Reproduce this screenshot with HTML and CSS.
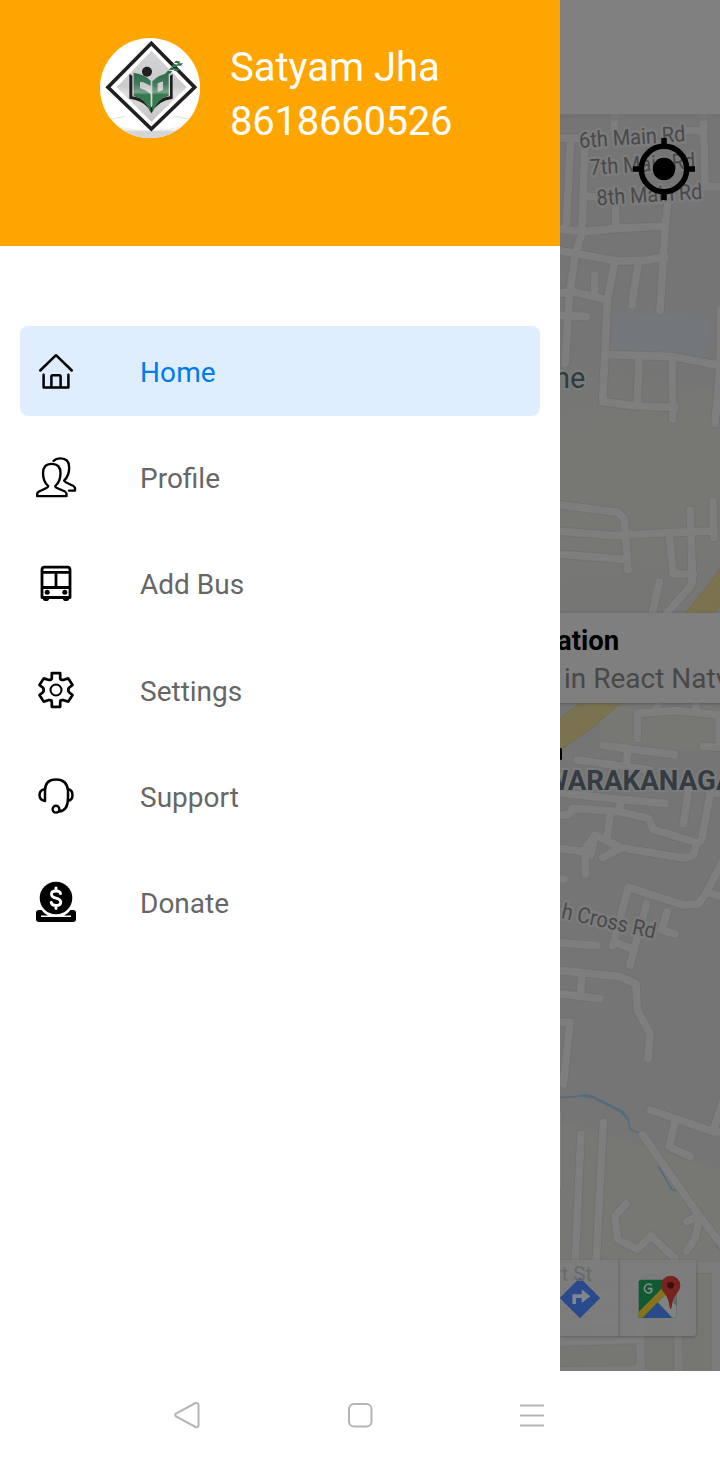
FILE: index.html
```html
<!DOCTYPE html>
<html lang="en">
<head>
<meta charset="utf-8">
<title>Home</title>
<link rel="stylesheet" href="styles.css">
</head>
<body>
<div class="app">
<aside class="drawer">
  <header class="profile">
    <svg class="avatar" viewBox="30 30 300 300">
      <defs>
        <clipPath id="round"><circle cx="180" cy="180" r="150"/></clipPath>
        <linearGradient id="steel" x2="0" y2="1"><stop offset="0" stop-color="#d4d4d6"/><stop offset=".5" stop-color="#cbcbcd"/><stop offset=".6" stop-color="#dedede"/><stop offset="1" stop-color="#c2c2c4"/></linearGradient>
        <linearGradient id="leaf" gradientUnits="userSpaceOnUse" x1="0" y1="130" x2="0" y2="255"><stop offset="0" stop-color="#2b6b45"/><stop offset=".3" stop-color="#41795a"/><stop offset=".5" stop-color="#7fa38b"/><stop offset=".56" stop-color="#377a50"/><stop offset="1" stop-color="#347a4d"/></linearGradient>
      </defs>
      <circle cx="180" cy="180" r="150" fill="#fff"/>
      <g clip-path="url(#round)">
        <path d="M50 283Q180 330 310 283V340H50Z" fill="#f0f0f1"/>
        <path d="M40 308H320V330H40Z" fill="#d2d6d8"/>
        <path d="M60 275L105 265M252 264L300 274" stroke="#ccc" stroke-width="2"/>
        <path d="M184 46L314 178L184 303L54 178Z" fill="#fff" stroke="#231f20" stroke-width="11"/>
        <path d="M184 68L290 178L184 281L80 178Z" fill="url(#steel)"/>
        <path d="M118 138V212Q168 218 184 256Q202 218 248 212V138L240 143V205Q200 210 185 238Q166 210 127 205V143Z" fill="#231f20"/>
        <circle cx="171" cy="131" r="15" fill="#231f20"/>
        <path fill-rule="evenodd" d="M131 134Q166 140 182 158V174L166 166Q158 161 150 162V181Q166 184 182 198V254Q166 211 131 204ZM187 160Q204 141 236 135V204Q204 210 187 254ZM203 166V192L219 186V160Z" fill="url(#leaf)"/>
        <path d="M252 105L258 98L272 101L266 106ZM236 125L243 118L256 120L250 126ZM225 138L233 128L247 129L240 137ZM264 106H279L273 113H260ZM244 116L250 108L264 110L257 118ZM251 128L257 121L269 123L263 130Z" fill="#2d7048"/>
      </g>
    </svg>
    <div class="person"><div>Satyam Jha</div><div class="phone">8618660526</div></div>
  </header>
  <nav class="menu">
    <a class="item active">
      <svg viewBox="0 0 40 40"><path d="M4.200 19.500L20 4.200L35.800 19.500M7.600 23.700V36.500H32.400V23.700M15.400 36V25.500Q15.400 24.200 16.700 24.200H23.300Q24.600 24.200 24.600 25.500V36" stroke-width="2.500"/></svg>
      <span>Home</span></a>
    <a class="item">
      <svg viewBox="0 0 40 40"><path d="M12.200 28Q7 23 7 14Q7 3.800 15.700 3.800Q24.500 3.800 24.500 14Q24.500 23 19.200 28Q19.200 29.500 21.500 30.500L29 34Q30.500 35 30.500 36.500V39H1.200V36.500Q1.200 35 3 34L10 30.500Q12.200 29.500 12.200 28ZM17.500 .8Q20 -2 24.500 -2Q33.200 -2 33.200 8Q33.200 16.500 28.200 22Q28.200 23 30 24L37.500 28Q39 29 39 30.500V33H33" transform="translate(0 3.300) scale(1 .92)" stroke-width="2.400"/></svg>
      <span>Profile</span></a>
    <a class="item">
      <svg viewBox="0 0 40 40"><path d="M8.500 4.200H31.500Q34 4.200 34 7V34.500H6V7Q6 4.200 8.500 4.200ZM6 9.300H34M20 9.300V24.500M6 24.500H34" stroke-width="2.800"/><path d="M7 34H13V36Q13 38 10 38T7 36ZM27 34H33V36Q33 38 30 38T27 36Z" fill="#000" stroke="none"/><circle cx="11.200" cy="29.200" r="2.500" fill="#000" stroke="none"/><circle cx="28.800" cy="29.200" r="2.500" fill="#000" stroke="none"/></svg>
      <span>Add Bus</span></a>
    <a class="item">
      <svg viewBox="0 0 40 40"><path d="M15.800 3.200H24.200V8Q24.200 9.800 26 9.800L27.800 9.800L32.300 8.400L36.500 15L33 17.800Q31.500 20 33 22.200L36.500 25L32.300 31.600L27.800 30.200H26Q24.200 30.200 24.200 32V36.800H15.800V32Q15.800 30.200 14 30.200H12.200L7.700 31.600L3.500 25L7 22.200Q8.500 20 7 17.800L3.500 15L7.700 8.400L12.200 9.800H14Q15.800 9.800 15.800 8Z" stroke-width="2.700"/><circle cx="20" cy="20" r="5.500" stroke-width="2"/></svg>
      <span>Settings</span></a>
    <a class="item">
      <svg viewBox="0 0 40 40"><path d="M9 25V14.500Q9 3.500 20 3.500T32 14.500V22Q32 34.800 23 35.600M9 13Q3.500 14 3.500 19T9 25M32 13Q36.500 14 36.500 19T32 25" stroke-width="2.500"/><circle cx="20" cy="33.200" r="3.400" stroke-width="2.400"/></svg>
      <span>Support</span></a>
    <a class="item">
      <svg viewBox="0 0 40 40"><circle cx="20" cy="16" r="16.300" fill="#000" stroke="none"/><path d="M3 28H5.500Q8 32 12 33.500H5V35H35V33.500H28Q32 32 34.500 28H37Q40 28 40 31V37Q40 40 37 40H3Q0 40 0 37V31Q0 28 3 28Z" fill="#000" stroke="none"/><path d="M24.500 11.500Q24 9 20 9Q15.500 9 15.500 12T20 16.200T24.800 20Q24.800 23.500 20 23.500Q15.800 23.500 15.200 20.500M20 6V9M20 23.500V26.500" stroke="#fff" stroke-width="2.900"/></svg>
      <span>Donate</span></a>
  </nav>
</aside>
<main class="backdrop">
<svg class="map" viewBox="560 0 160 1371">
  <defs>
    <linearGradient id="sand" gradientUnits="userSpaceOnUse" x1="560" y1="360" x2="600" y2="650"><stop offset="0" stop-color="#757575"/><stop offset=".25" stop-color="#777774"/><stop offset=".65" stop-color="#777774"/><stop offset="1" stop-color="#757575"/></linearGradient>
    <linearGradient id="bar" x2="0" y2="1"><stop offset="0" stop-color="#6f6f6f"/><stop offset="1" stop-color="#757575"/></linearGradient>
    <g id="roads">
      <path transform="translate(550 100) scale(.33333)" d="M30 115L130 114M390 94L450 90M193 42V90M62 118L48 390M105 118L96 395M460 42L465 260H515M115 290H150M197 315L198 380M355 295L345 385L330 632M20 385L95 395L200 385L345 378M98 395L75 465L58 590L45 790M20 450L200 483L280 482L345 470M193 490L172 600L158 905M134 525V590M20 580L75 577L165 598M20 645L110 650M265 485L246 616M165 763L370 770L515 797M267 770L262 905M367 770L368 958M158 905L260 918L375 922M512 630L510 800L495 970"/>
      <path transform="translate(550 450) scale(.33333)" d="M20 163L205 187L222 205L234 360M20 243L190 257L360 248L492 243M20 312L225 328M421 180L427 375L425 405L350 490M489 155L492 262M358 258L370 372H430M328 395L308 485M262 865L263 790L380 782L515 795M322 750V785M438 750V785M160 886L373 914M460 888L515 893M508 795V890M235 895L228 945M82 930L300 960"/>
      <path transform="translate(550 780) scale(.33333)" d="M20 38L212 58L345 70M212 58L208 95M20 105H55L68 85L210 95L295 115L310 148L440 188M418 10L400 132M490 -10L455 180L440 190L430 225L405 235L215 203L135 165L122 225M135 165L100 215M490 40H520M182 95L170 180M158 233L215 203M20 205L105 215L106 282M20 297H42M188 497L235 322L400 375L445 372L465 345L520 240M470 335L520 352M290 370L240 555M195 487L250 507M352 395L335 450L375 462M20 488L140 497M20 570L210 590L258 612L262 690L300 760L294 835M95 590L92 640M20 640L150 656M20 725L60 727L40 912"/>
      <path transform="translate(550 1080) scale(.33333)" d="M24 105V320M93 162L75 555M160 128L138 555M302 90L490 155H520M520 60L490 150M375 125L358 200L422 230M278 165L380 310L450 410L520 500M228 372L195 408L203 478L262 508L303 468L375 535V555M450 410L435 475L410 513M410 425L440 410"/>
    </g>
  </defs>
  <path class="land" d="M560 0H720V1371H560Z"/>
  <path d="M560 360L720 390V610H560Z" fill="url(#sand)"/>
  <path d="M612 313L708 318L706 357L673 353L611 349Z" fill="#73767a"/>
  <path d="M560 1120L720 1170V1371H560ZM600 705H720V750H600Z" fill="#777774"/>
  <g transform="translate(550 1080) scale(.33333)" class="river">
    <path d="M30 52L75 50L100 46" stroke-width="5"/><path d="M95 46L125 50L170 72L215 95L235 118" stroke-width="9"/><path d="M235 115L240 148L275 163" stroke-width="5"/><path d="M325 258L365 328L380 332M498 495L515 512" stroke-width="5"/>
  </g>
  <g transform="translate(550 450) scale(.33333)" class="highway"><path d="M515 350L475 405L404 492H490L515 460ZM95 755H217L120 838L25 905V810Z"/></g>
  <path d="M560 1262H720V1371H560Z" fill="#7c7c7c"/>
  <g transform="translate(550 1080) scale(.33333)" class="block"><path d="M20 800L257 792V855L20 860ZM284 580H370L372 880H286ZM393 580H484V880H400ZM30 590L252 583V630L30 638ZM30 670L256 663V700H30ZM30 740L256 730V762L30 767Z"/></g>
  <use href="#roads" class="edge"/><use href="#roads" class="road"/>
  <path d="M560 117L610 115" stroke="#696969"/>
  <g class="street">
    <text transform="translate(579.500 148) rotate(-3.700)" textLength="106.500" lengthAdjust="spacingAndGlyphs">6th Main Rd</text>
    <text transform="translate(590 175) rotate(-3.700)" textLength="106" lengthAdjust="spacingAndGlyphs">7th Main Rd</text>
    <text transform="translate(597 205.500) rotate(-3.700)" textLength="106" lengthAdjust="spacingAndGlyphs">8th Main Rd</text>
    <text transform="translate(560.500 918) rotate(12.500)" textLength="96" lengthAdjust="spacingAndGlyphs">h Cross Rd</text>
  </g>
  <text class="place" x="585.500" y="387.500" text-anchor="end">ne</text>
  <text class="place area" x="544" y="790" textLength="190.500" lengthAdjust="spacingAndGlyphs">WARAKANAGA</text>
  <rect x="556" y="748" width="6" height="12" rx="1.500"/>
  <path d="M560 0H720V114H560Z" fill="#808080"/><path d="M560 114H720V121H560Z" fill="url(#bar)" opacity=".65"/>
  <g class="locate"><circle cx="664" cy="169" r="22.700"/><path d="M664 138V146M664 192V200M633 169H641M687 169H695"/><circle class="dot" cx="664" cy="169" r="11.200"/></g>
</svg>
<div class="callout"><strong>ation</strong><span>in React Natv</span></div>
<div class="controls">
  <span class="ghost">rt St</span>
  <svg class="direction" viewBox="0 0 120 120"><path d="M60 1L119 60L60 119L1 60Z" fill="#294a8c" stroke="#294a8c" stroke-width="3" stroke-linejoin="round"/><path d="M37 78V49H65V34L91 55L65 75V60H48V78Z" fill="#81858e"/></svg>
  <svg class="google" viewBox="0 0 130 130"><path d="M8 14H114Q122 14 122 22V120Q122 128 114 128H8V22Q8 14 16 14Z" fill="#105a32"/><path d="M65 82L109 128H23Z" fill="#294a8c"/><path d="M65 82L90 57L122 93V120Q122 128 114 128H109Z" fill="#828282"/><path d="M90 57L122 25V93Z" fill="#696969"/><path d="M8 110L79 39L95 52L20 128H8Z" fill="#85731f"/><path d="M47 31A13 13 0 1 0 47 50V41H35" fill="none" stroke="#858b87" stroke-width="5"/><path d="M104 2A29 29 0 0 1 133 31Q133 44 121 57Q109 73 107 97Q106 102 104 102T101 97Q99 73 87 57Q75 44 75 31A29 29 0 0 1 104 2Z" fill="#75231c"/><circle cx="104" cy="31" r="10" fill="#3c0f0c"/></svg>
</div>
</main>
<footer class="system">
  <svg viewBox="0 0 28 28"><path d="M22.500 2L3 12.500Q1.300 14 3 15.500L22.500 26Q25.500 27 25.500 24V4Q25.500 1.500 22.500 2Z"/></svg>
  <svg viewBox="0 0 28 28"><rect x="3" y="3" width="22.500" height="22.500" rx="5"/></svg>
  <svg viewBox="0 0 28 28"><path d="M2 4.500H26M2 14.500H26M2 24.500H26"/></svg>
</footer>
</div>
</body>
</html>
```
FILE: styles.css
```css
* { box-sizing: border-box; }
body { margin: 0; background: #fff; font-family: Roboto, sans-serif; }
.app { width: 720px; height: 1458px; display: grid; grid-template: 1371px 87px / 560px 160px; overflow: hidden; }
.drawer { background: #fff; }
.profile { height: 246px; padding: 38px 0 0 100px; display: flex; align-items: flex-start; gap: 30px; background: #ffa500; }
.avatar { width: 100px; height: 100px; }
.person { padding-top: 3px; color: #fff; font-size: 40px; line-height: 54px; }
.phone { letter-spacing: -.25px; }
.menu { display: grid; gap: 16.400px; padding: 80px 20px 0; }
.item { height: 90px; display: flex; align-items: center; gap: 64px; padding: 2px 16px 0; border-radius: 8px; font-size: 28px; color: #666; }
.item svg { width: 40px; height: 40px; margin-bottom: 3px; overflow: visible; fill: none; stroke: #000; stroke-linecap: round; stroke-linejoin: round; }
.active { background: #dfeeff; color: #007aed; letter-spacing: .1px; }

.backdrop { position: relative; overflow: hidden; }
.map { display: block; width: 160px; height: 1371px; }
.land { fill: #757575; }
.road, .edge { fill: none; stroke-linecap: round; stroke-linejoin: round; }
.edge { stroke: #707070; stroke-width: 28px; }
.road { stroke: #7e7e7e; stroke-width: 23px; }
.river { fill: none; stroke: #546d7e; stroke-linejoin: round; }
.highway { fill: #7b7350; stroke: #716847; stroke-width: 2px; }
.block { fill: #767673; stroke: #707070; stroke-width: 2px; }
.street { font-size: 22px; fill: #48494b; stroke: #7c7c7c; stroke-width: 5px; paint-order: stroke; stroke-linejoin: round; }
.place { font-size: 29px; fill: #303b42; stroke: #7b7b7b; stroke-width: 4px; paint-order: stroke; }
.area { font-size: 28.500px; font-weight: 700; fill: #343b43; }
.locate { fill: none; stroke: #000; stroke-width: 5.500px; }
.locate .dot { fill: #000; stroke: none; }
.callout { position: absolute; top: 613px; left: 0; width: 170px; height: 90px; padding-top: 9px; background: #7f7f7f; box-shadow: 0 1px 3px #4448; font-size: 28px; line-height: 38px; white-space: nowrap; color: #484848; display: grid; grid-template-rows: 38px 38px; }
.callout strong { justify-self: start; margin-left: -3px; color: #000; font-size: 27.500px; }
.callout span { margin-left: 4px; }
.controls { position: absolute; top: 1260px; left: 0; width: 136px; height: 76px; display: grid; grid-template-columns: 59px 77px; align-items: center; background: #7d7d7de0; border-radius: 0 3px 3px 0; box-shadow: 0 1px 3px #4448; }
.controls::after { content: ""; position: absolute; left: 58px; width: 2px; height: 76px; background: #707070; }
.ghost { position: absolute; left: -6px; top: 2px; font-size: 20.500px; color: #696969; }
.direction { width: 40px; height: 40px; }
.google { width: 43.300px; height: 43.300px; overflow: visible; margin: -3px 0 0 17px; }

.system { grid-column: 1 / 3; display: flex; padding: 30px 0 0 173px; gap: 144.500px; background: #fff; }
.system svg { width: 28px; height: 28px; fill: none; stroke: #b5b5b5; stroke-width: 2px; }
```
